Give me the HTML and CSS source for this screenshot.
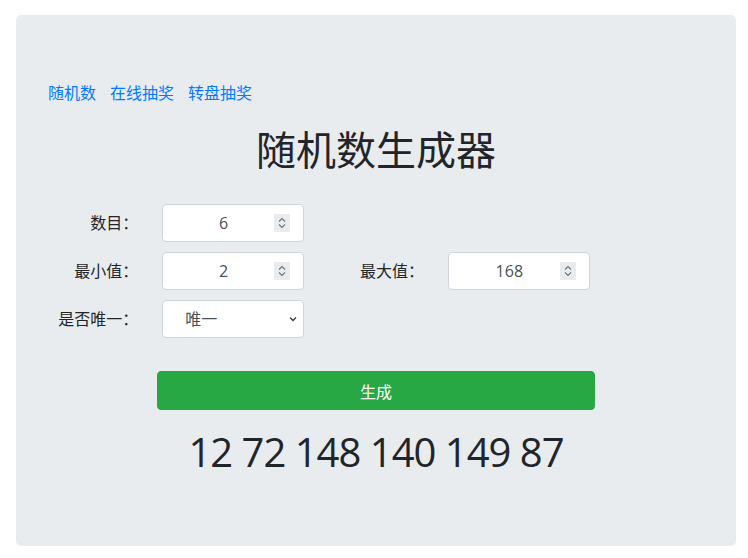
FILE: index.html
```html
<!DOCTYPE html>
<html lang="zh-CN">
<head>
    <meta charset="UTF-8">
    <meta name="viewport" content="width=device-width, initial-scale=1.0">
    <title>随机数生成器</title>
    <link rel="stylesheet" href="styles.css">
</head>
<body>
<div class="jumbotron">
    <!-- 顶部导航 -->
    <nav class="nav">
        <a href="#">随机数</a>
        <a href="#">在线抽奖</a>
        <a href="#">转盘抽奖</a>
    </nav>

    <h1 class="title">随机数生成器</h1>

    <!-- 表单 -->
    <form class="form" onsubmit="return false">
        <label class="label">数目：</label>
        <div class="field">
            <input class="input" type="number" value="6">
            <span class="spin"><svg width="16" height="18" viewBox="0 0 16 18"><path d="M5 7.5 8 4.5l3 3M5 10.5 8 13.5l3-3" fill="none" stroke="#6c757d" stroke-width="1.1"/></svg></span>
        </div>
        <div></div>
        <div></div>

        <label class="label">最小值：</label>
        <div class="field">
            <input class="input" type="number" value="2">
            <span class="spin"><svg width="16" height="18" viewBox="0 0 16 18"><path d="M5 7.5 8 4.5l3 3M5 10.5 8 13.5l3-3" fill="none" stroke="#6c757d" stroke-width="1.1"/></svg></span>
        </div>
        <label class="label">最大值：</label>
        <div class="field">
            <input class="input" type="number" value="168">
            <span class="spin"><svg width="16" height="18" viewBox="0 0 16 18"><path d="M5 7.5 8 4.5l3 3M5 10.5 8 13.5l3-3" fill="none" stroke="#6c757d" stroke-width="1.1"/></svg></span>
        </div>

        <label class="label">是否唯一：</label>
        <div class="field">
            <select class="select">
                <option>唯一</option>
                <option>不唯一</option>
            </select>
            <span class="caret"><svg width="10" height="10" viewBox="0 0 10 10"><path d="M2 3.5 5 6.5 8 3.5" fill="none" stroke="#343a40" stroke-width="1.3"/></svg></span>
        </div>
    </form>

    <button class="btn" type="button">生成</button>

    <div class="result">12 72 148 140 149 87</div>
</div>
</body>
</html>
```
FILE: styles.css
```css
body {
    margin: 0;
    padding: 15px 12px 12px 16px;
    background-color: #fff;
    font-family: "Segoe UI", "Open Sans", "Noto Sans CJK SC", sans-serif;
    font-size: 16px;
    line-height: 1.5;
    color: #212529;
}

.jumbotron {
    width: 720px;
    height: 531px;
    box-sizing: border-box;
    padding: 66px 32px 0 32px;
    background-color: #e9ecef;
    border-radius: 5px;
}

.nav {
    display: flex;
    gap: 14px;
}

.nav a {
    color: #007bff;
    text-decoration: none;
}

.title {
    margin: 21px 0 30px;
    font-size: 40px;
    font-weight: 400;
    line-height: 1.2;
    text-align: center;
}

/* 表单两栏布局 */
.form {
    display: grid;
    grid-template-columns: 114.3px 171.5px 114.3px 171.5px;
    row-gap: 10px;
    margin-left: -15px;
}

.label {
    padding: 7px 9px 0 15px;
    text-align: right;
    white-space: nowrap;
}

.field {
    position: relative;
    padding: 0 15px;
}

.input,
.select {
    width: 100%;
    height: 38px;
    box-sizing: border-box;
    border: 1px solid #ced4da;
    border-radius: 4px;
    background-color: #fff;
    font-family: inherit;
    font-size: 16px;
    color: #495057;
    outline: none;
}

.input {
    padding: 6px 31px 6px 12px;
    text-align: center;
    -moz-appearance: textfield;
}

.input::-webkit-inner-spin-button,
.input::-webkit-outer-spin-button {
    -webkit-appearance: none;
    margin: 0;
}

.spin {
    position: absolute;
    top: 10px;
    right: 29px;
    width: 16px;
    height: 18px;
    background-color: #e9ecef;
    pointer-events: none;
}

.spin svg {
    display: block;
}

.select {
    appearance: none;
    -webkit-appearance: none;
    padding: 6px 12px 6px 22px;
}

.caret {
    position: absolute;
    top: 14px;
    right: 21px;
    pointer-events: none;
}

.caret svg {
    display: block;
}

.btn {
    display: block;
    width: 438px;
    height: 39px;
    margin: 33px auto 0;
    border: 1px solid #28a745;
    border-radius: 4px;
    background-color: #28a745;
    color: #fff;
    font-family: inherit;
    font-size: 16px;
}

.result {
    margin-top: 18px;
    font-size: 40px;
    line-height: 1.2;
    letter-spacing: -1px;
    text-align: center;
}
```
